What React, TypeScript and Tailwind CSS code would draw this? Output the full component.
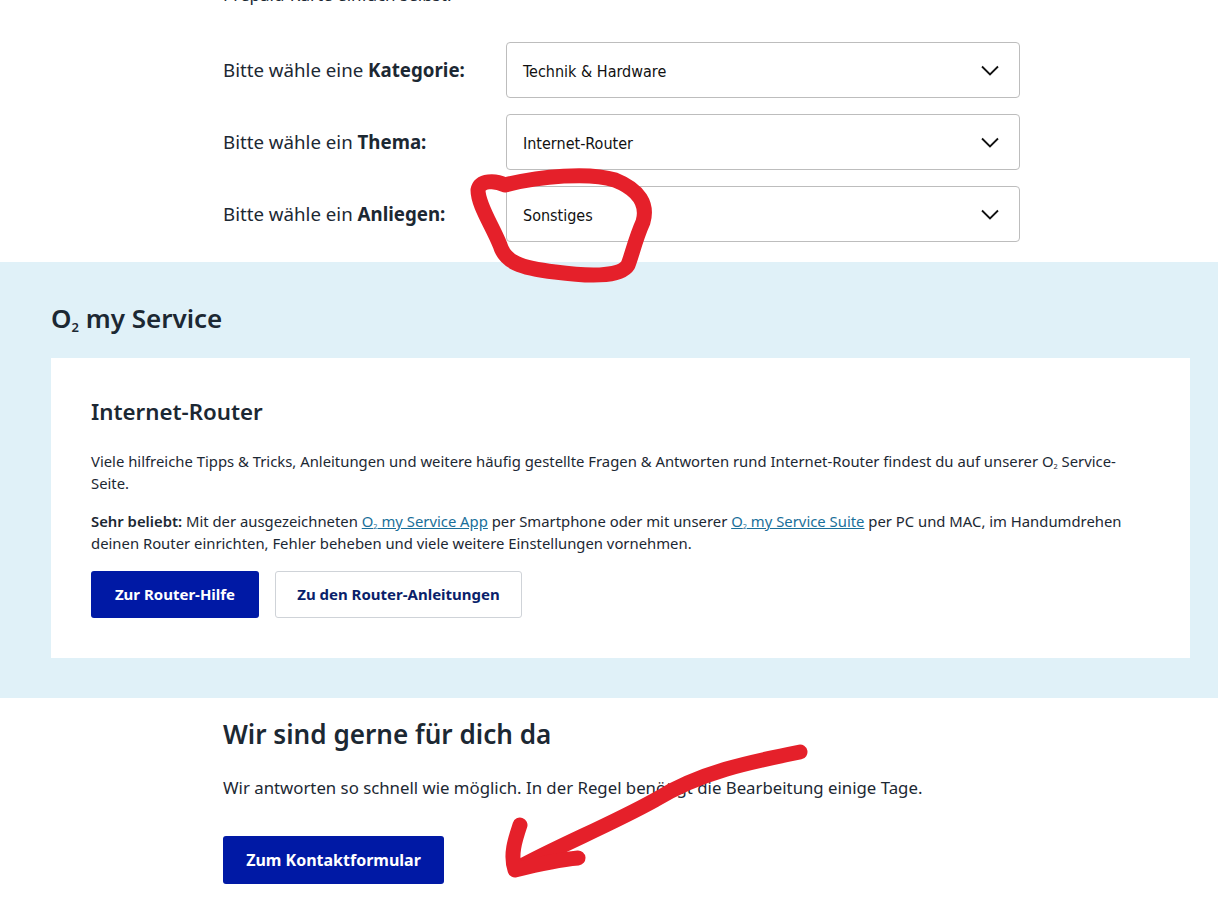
import React from "react";

const font = { fontFamily: '"Noto Sans", "Open Sans", Arial, sans-serif' };
const selFont = { fontFamily: '"DejaVu Sans Condensed", "Liberation Sans", Arial, sans-serif' };

function Chevron() {
  return (
    <svg width="18" height="11" viewBox="0 0 18 11" fill="none">
      <path d="M1 1.5 L9 9.5 L17 1.5" stroke="#111" strokeWidth="1.8" />
    </svg>
  );
}

function Row({ pre, bold, value }: { pre: string; bold: string; value: string }) {
  return (
    <div className="flex items-center">
      <div className="w-[283px] text-[18.7px] text-[#1c2833]">
        {pre} <span className="font-bold">{bold}:</span>
      </div>
      <div className="flex h-[56px] w-[514px] items-center justify-between rounded-[4px] border border-[#bdbdbd] bg-white pl-[16px] pr-[20px]">
        <span className="pt-[3px] text-[16px] text-[#111]" style={selFont}>{value}</span>
        <Chevron />
      </div>
    </div>
  );
}

function O2() {
  return (
    <>
      O<span className="relative top-[0.3em] text-[0.5em] leading-none">2</span>
    </>
  );
}

export default function App() {
  return (
    <div className="relative min-h-[913px] overflow-hidden bg-white" style={font}>
      {/* top form */}
      <div className="pl-[223px]">
        <div className="-mt-[14px] h-[18px] text-[17px] leading-[18px] text-[#1c2833]">Prepaid-Karte einfach selbst.</div>
        <div className="mt-[38px] flex flex-col gap-[16px]">
          <Row pre="Bitte wähle eine" bold="Kategorie" value="Technik & Hardware" />
          <Row pre="Bitte wähle ein" bold="Thema" value="Internet-Router" />
          <Row pre="Bitte wähle ein" bold="Anliegen" value="Sonstiges" />
        </div>
      </div>

      {/* blue section */}
      <div className="mt-[20px] bg-[#e0f1f8] px-[51px] pb-[40px] pt-[36px] pr-[28px]">
        <h2 className="text-[26px] font-semibold leading-[40px] text-[#1c2833]">
          <O2 /> my Service
        </h2>
        <div className="mt-[20px] bg-white px-[40px] pb-[40px] pt-[37px]">
          <h3 className="text-[22.3px] font-semibold leading-[34px] text-[#1c2833]">Internet-Router</h3>
          <p className="mt-[21px] text-[14.85px] leading-[22px] text-[#1c2833]">
            Viele hilfreiche Tipps &amp; Tricks, Anleitungen und weitere häufig gestellte Fragen &amp; Antworten rund Internet-Router findest du auf unserer <O2 /> Service-Seite.
          </p>
          <p className="mt-[16px] text-[14.85px] leading-[22px] text-[#1c2833]">
            <span className="font-semibold">Sehr beliebt:</span> Mit der ausgezeichneten{" "}
            <a className="text-[#1a6f9a] underline">
              <O2 /> my Service App
            </a>{" "}
            per Smartphone oder mit unserer{" "}
            <a className="text-[#1a6f9a] underline">
              <O2 /> my Service Suite
            </a>{" "}
            per PC und MAC, im Handumdrehen deinen Router einrichten, Fehler beheben und viele weitere Einstellungen vornehmen.
          </p>
          <div className="mt-[17px] flex gap-[16px]">
            <button className="h-[47px] w-[168px] rounded-[3px] bg-[#0019a5] text-[15px] font-bold text-white">Zur Router-Hilfe</button>
            <button className="h-[47px] w-[247px] rounded-[3px] border border-[#cfd3d8] bg-white text-[15px] font-bold text-[#0a1f6b]">Zu den Router-Anleitungen</button>
          </div>
        </div>
      </div>

      {/* contact section */}
      <div className="pl-[223px] pt-[16px]">
        <h2 className="text-[26.1px] font-semibold leading-[40px] text-[#1c2833]">Wir sind gerne für dich da</h2>
        <p className="mt-[21px] text-[16.8px] leading-[26px] text-[#1c2833]">
          Wir antworten so schnell wie möglich. In der Regel benötigt die Bearbeitung einige Tage.
        </p>
        <button className="mt-[35px] h-[48px] w-[221px] rounded-[3px] bg-[#0019a5] text-[16px] font-bold text-white">Zum Kontaktformular</button>
      </div>

      {/* red annotations */}
      <svg className="pointer-events-none absolute left-0 top-0" width="1218" height="913" viewBox="0 0 1218 913" fill="none">
        <path
          d="M505 185 C 540 176, 590 172, 615 180 C 640 190, 648 205, 643 222 C 635 240, 632 255, 628 265 C 620 278, 585 276, 555 272 C 520 268, 505 262, 500 245 C 492 225, 478 205, 478 190 C 480 180, 495 180, 505 185"
          stroke="#e5202a"
          strokeWidth="15"
          strokeLinecap="round"
          strokeLinejoin="round"
        />
        <path
          d="M800 752 C 750 762, 700 772, 655 800 C 610 825, 560 845, 518 868"
          stroke="#e5202a"
          strokeWidth="15"
          strokeLinecap="round"
        />
        <path
          d="M520 825 C 515 840, 510 855, 515 870 C 535 865, 555 860, 578 858"
          stroke="#e5202a"
          strokeWidth="15"
          strokeLinecap="round"
          strokeLinejoin="round"
        />
      </svg>
    </div>
  );
}
